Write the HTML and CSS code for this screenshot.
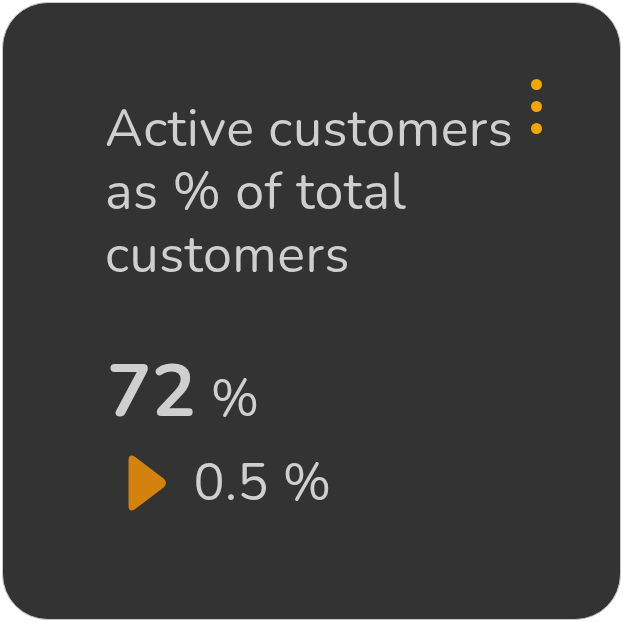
FILE: index.html
```html
<!DOCTYPE html>
<html lang="en">
<head>
<meta charset="utf-8">
<title>KPI card</title>
<link rel="stylesheet" href="styles.css">
</head>
<body>
<div class="card">
  <div class="header">
    <h1 class="title">Active customers as % of total customers</h1>
    <button class="menu" aria-label="More options">
      <span class="dot"></span><span class="dot"></span><span class="dot"></span>
    </button>
  </div>
  <div class="value"><span class="num">72</span><span class="unit">%</span></div>
  <div class="delta">
    <svg class="arrow" width="40" height="58" viewBox="0 0 40 58" aria-hidden="true">
      <path d="M3 6 Q3 1 7 4 L36 26 Q39 29 36 32 L7 54 Q3 57 3 52 Z" fill="#d4820e" stroke="#d4820e" stroke-width="3" stroke-linejoin="round"/>
    </svg>
    <span class="delta-text">0.5 %</span>
  </div>
</div>
</body>
</html>
```
FILE: styles.css
```css
html, body {
  margin: 0;
  padding: 0;
  background: #ffffff;
}
body {
  padding: 2px;
  font-family: "Nunito", "Open Sans", "Noto Sans", sans-serif;
}
.card {
  box-sizing: border-box;
  width: 619px;
  height: 618px;
  background: #333333;
  border: 1.5px solid #c8c8c8;
  border-radius: 46px;
  padding: 75px 0 0 102px;
  color: #cfcfcf;
}
.header {
  display: flex;
  align-items: flex-start;
  gap: 4px;
}
.title {
  margin: 19px 0 0 0;
  width: 422px;
  font-size: 52px;
  font-weight: 400;
  letter-spacing: 0.5px;
  line-height: 63px;
  color: #cfcfcf;
}
.menu {
  display: flex;
  flex-direction: column;
  gap: 11px;
  margin: 0;
  padding: 1px 0 0 0;
  background: none;
  border: none;
  cursor: pointer;
}
.dot {
  width: 11px;
  height: 11px;
  border-radius: 50%;
  background: #f0a800;
}
.value {
  margin-top: 69px;
  display: flex;
  align-items: baseline;
  gap: 15px;
  padding-left: 2px;
  line-height: 1;
}
.num {
  font-size: 74px;
  font-weight: 700;
}
.unit {
  font-size: 52px;
  font-weight: 400;
}
.delta {
  margin-top: 25px;
  display: flex;
  align-items: center;
  gap: 27px;
  padding-left: 21.5px;
}
.arrow {
  display: block;
}
.delta-text {
  font-size: 52px;
  font-weight: 400;
  letter-spacing: 0.4px;
  line-height: 1;
}
```
